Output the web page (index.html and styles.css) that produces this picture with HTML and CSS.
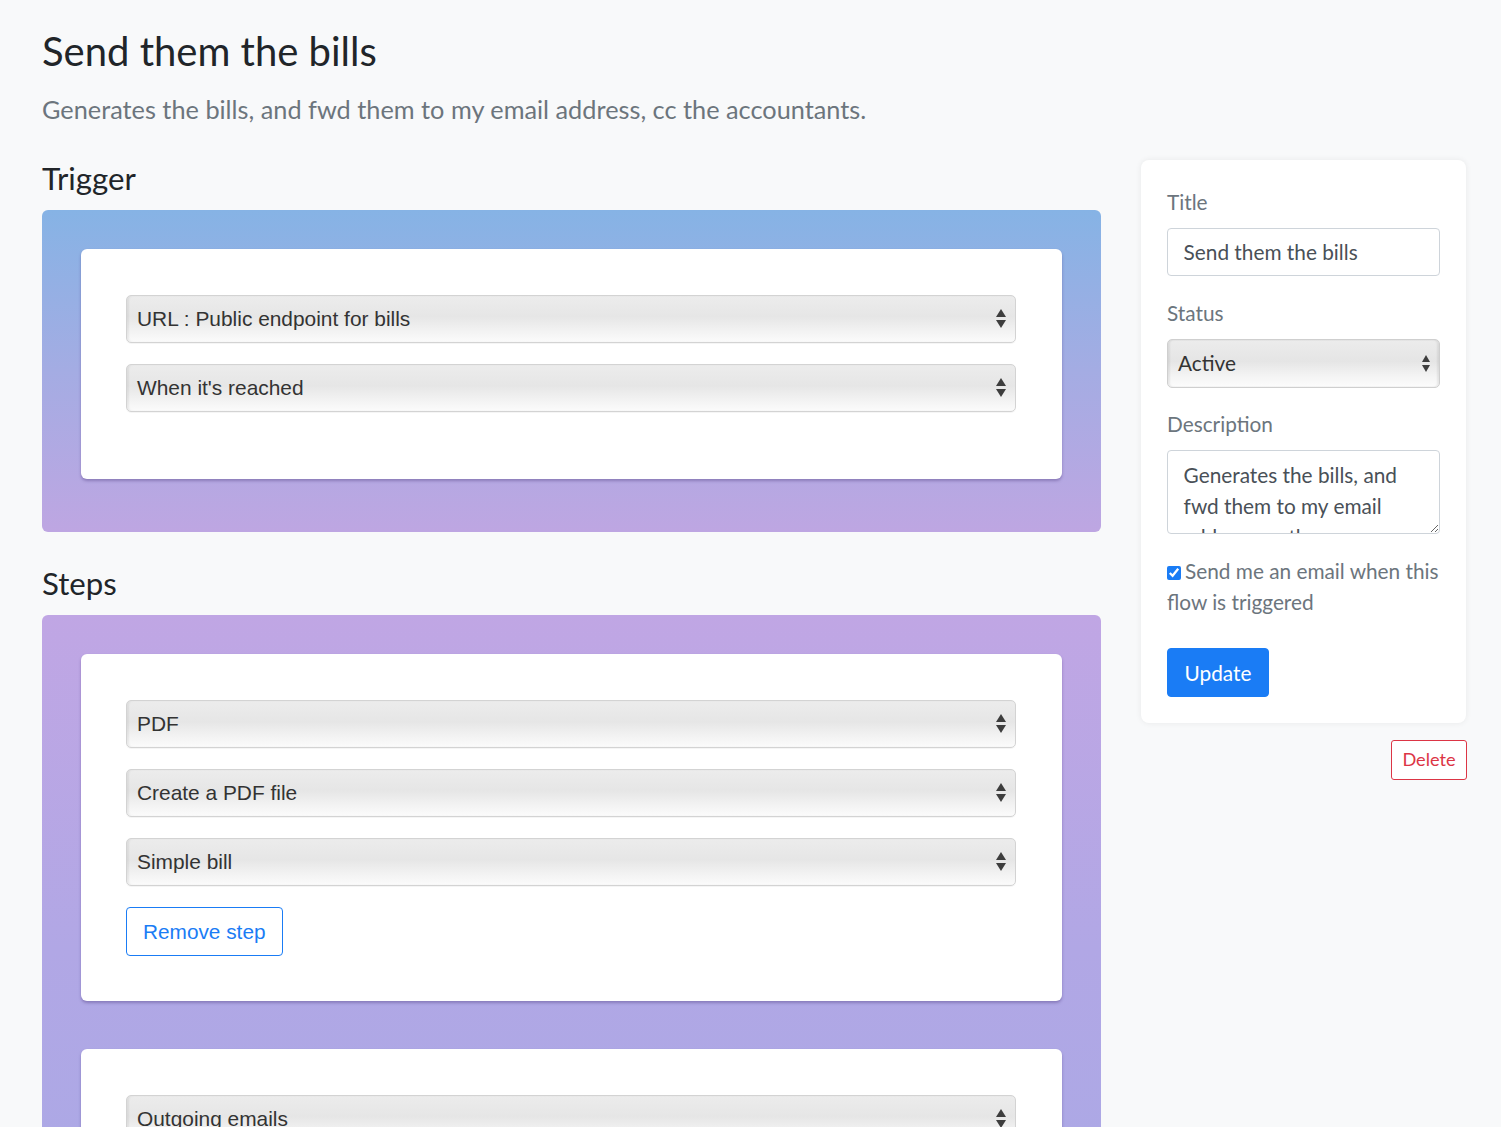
FILE: index.html
```html
<!DOCTYPE html>
<html lang="en">
<head>
<meta charset="utf-8">
<title>Send them the bills</title>
<link rel="stylesheet" href="styles.css">
</head>
<body>
<div class="page">
  <header class="page-head">
    <h1 class="title">Send them the bills</h1>
    <p class="lead">Generates the bills, and fwd them to my email address, cc the accountants.</p>
  </header>
  <div class="layout">
    <main class="builder">
      <h4 class="section-title">Trigger</h4>
      <section class="flow-box trigger-box">
        <div class="step-card">
          <div class="fake-select">URL : Public endpoint for bills</div>
          <div class="fake-select">When it's reached</div>
        </div>
      </section>

      <h4 class="section-title">Steps</h4>
      <section class="flow-box steps-box">
        <div class="step-card">
          <div class="fake-select">PDF</div>
          <div class="fake-select">Create a PDF file</div>
          <div class="fake-select">Simple bill</div>
          <button class="btn-remove" type="button">Remove step</button>
        </div>
        <div class="step-card">
          <div class="fake-select">Outgoing emails</div>
          <div class="fake-select">Send an email</div>
          <div class="fake-select">Bills to the accountants</div>
          <button class="btn-remove" type="button">Remove step</button>
        </div>
      </section>
    </main>

    <aside class="sidebar">
      <form class="side-card">
        <div class="form-group">
          <label class="form-label">Title</label>
          <div class="form-input">Send them the bills</div>
        </div>
        <div class="form-group">
          <label class="form-label">Status</label>
          <div class="status-select">Active</div>
        </div>
        <div class="form-group">
          <label class="form-label">Description</label>
          <textarea class="form-textarea">Generates the bills, and fwd them to my email address, cc the accountants.</textarea>
        </div>
        <div class="form-check">
          <input type="checkbox" class="check" checked><span class="check-label">Send me an email when this flow is triggered</span>
        </div>
        <button class="btn-update" type="button">Update</button>
      </form>
      <div class="delete-row">
        <button class="btn-delete" type="button">Delete</button>
      </div>
    </aside>
  </div>
</div>
</body>
</html>
```

FILE: styles.css
```css
* { box-sizing: border-box; }

html, body {
  margin: 0;
  padding: 0;
  background: #f8f9fa;
  font-family: Lato, "Open Sans", sans-serif;
  color: #212529;
  font-size: 20.8px;
  line-height: 1.5;
}

.page {
  padding: 27px 35px 0 42px;
}

.title {
  margin: 0;
  font-size: 40px;
  font-weight: 400;
  line-height: 48px;
}

.lead {
  margin: 16px 0 0;
  font-size: 25.3px;
  font-weight: 400;
  color: #6c757d;
  line-height: 36px;
}

.layout {
  display: flex;
  align-items: flex-start;
  gap: 40px;
  margin-top: 33px;
}

.builder {
  width: 1059px;
  flex: none;
}

.section-title {
  margin: 0 0 12.6px;
  font-size: 31.2px;
  font-weight: 400;
  line-height: 1.2;
}

.flow-box {
  border-radius: 6px;
  padding: 39px 39px 53px;
  margin-bottom: 33px;
}

.trigger-box {
  background: linear-gradient(180deg, #86b3e5 0%, #a4ace3 50%, #bea6e2 100%);
}

.steps-box {
  background: linear-gradient(180deg, #c0a6e4 0%, #b1a7e5 40%, #a6aae6 100%);
  display: flex;
  flex-direction: column;
  gap: 48px;
}

.step-card {
  background: #fff;
  border-radius: 6px;
  padding: 46px 46px 45px 45px;
  box-shadow: 0 2px 3px rgba(60, 40, 110, 0.35);
}

.trigger-box .step-card {
  padding-bottom: 46px;
}

.fake-select {
  position: relative;
  height: 48px;
  margin-bottom: 21px;
  padding: 0 40px 0 10px;
  border: 1px solid #d3d3d3;
  border-radius: 5px;
  background: linear-gradient(180deg, #ececec 0%, #e6e6e6 45%, #f2f2f2 75%, #fbfbfb 100%);
  box-shadow: inset 2px 0 2px rgba(0, 0, 0, 0.06), 0 1px 0 rgba(0, 0, 0, 0.04);
  font-family: "Liberation Sans", Arial, sans-serif;
  font-size: 20.9px;
  color: #333;
  line-height: 46px;
  white-space: nowrap;
}

.fake-select::before,
.fake-select::after {
  content: "";
  position: absolute;
  right: 9px;
  width: 0;
  height: 0;
  border-left: 5px solid transparent;
  border-right: 5px solid transparent;
}

.fake-select::before {
  top: 13px;
  border-bottom: 8px solid #3d3d3d;
}

.fake-select::after {
  top: 24px;
  border-top: 8px solid #3d3d3d;
}

.btn-remove {
  display: inline-block;
  height: 49px;
  padding: 0 16px;
  border: 1px solid #1a7cf5;
  border-radius: 4px;
  background: #fff;
  color: #1a7cf5;
  font-family: "Liberation Sans", Arial, sans-serif;
  font-size: 20.8px;
  line-height: 47px;
  cursor: pointer;
}

.sidebar {
  width: 325px;
  flex: none;
}

.side-card {
  background: #fff;
  border-radius: 8px;
  padding: 26px;
  box-shadow: 0 0 6px rgba(0, 0, 0, 0.07);
}

.form-group {
  margin-bottom: 20.8px;
}

.form-label {
  display: block;
  margin-bottom: 10.4px;
  color: #6c757d;
  font-size: 20.8px;
  line-height: 31.2px;
}

.form-input {
  height: 48.8px;
  padding: 7.8px 15.6px;
  border: 1px solid #ced4da;
  border-radius: 4px;
  color: #495057;
  line-height: 31.2px;
  background: #fff;
}

.status-select {
  position: relative;
  height: 48.8px;
  padding: 0 30px 0 10px;
  border: 1px solid #cfcfcf;
  border-radius: 5px;
  background: linear-gradient(180deg, #ececec 0%, #e5e5e5 45%, #f3f3f3 75%, #fcfcfc 100%);
  box-shadow: inset 2px 0 2px rgba(0, 0, 0, 0.07), inset -2px 0 2px rgba(0, 0, 0, 0.07);
  color: #333;
  line-height: 46px;
}

.status-select::before,
.status-select::after {
  content: "";
  position: absolute;
  right: 9px;
  width: 0;
  height: 0;
  border-left: 4px solid transparent;
  border-right: 4px solid transparent;
}

.status-select::before {
  top: 15px;
  border-bottom: 7px solid #3d3d3d;
}

.status-select::after {
  top: 25px;
  border-top: 7px solid #3d3d3d;
}

.form-textarea {
  display: block;
  width: 100%;
  height: 84px;
  padding: 7.8px 15.6px;
  margin: 0;
  border: 1px solid #ced4da;
  border-radius: 4px;
  color: #495057;
  font-family: Lato, "Open Sans", sans-serif;
  font-size: 20.8px;
  line-height: 31.2px;
  overflow: hidden;
  resize: vertical;
  background: #fff;
}

.form-check {
  margin-bottom: 31px;
  color: #6c757d;
  line-height: 31.2px;
}

.check {
  width: 14px;
  height: 14px;
  margin: 0 4px 0 0;
  vertical-align: -1px;
  accent-color: #1a7cf5;
}

.btn-update {
  display: inline-block;
  height: 48.8px;
  padding: 0 16.5px;
  border: 1px solid #1a7cf5;
  border-radius: 4px;
  background: #1a7cf5;
  color: #fff;
  font-family: Lato, "Open Sans", sans-serif;
  font-size: 20.8px;
  line-height: 46px;
  cursor: pointer;
}

.delete-row {
  display: flex;
  justify-content: flex-end;
  margin-top: 17px;
  margin-right: -1px;
}

.btn-delete {
  height: 39.7px;
  padding: 0 10.4px;
  border: 1px solid #dc3545;
  border-radius: 3px;
  background: #fff;
  color: #dc3545;
  font-family: Lato, "Open Sans", sans-serif;
  font-size: 18.2px;
  line-height: 37px;
  cursor: pointer;
}
```
